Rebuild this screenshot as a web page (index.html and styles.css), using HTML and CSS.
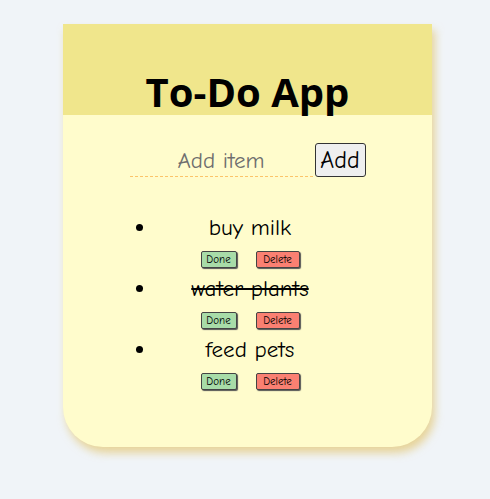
FILE: index.html
```html
<!DOCTYPE html>
<html>
<head>
<meta charset="utf-8">
<link rel="stylesheet" href="styles.css">
</head>
<body>
<div class="card">
  <div class="header"><h1 class="title">To-Do App</h1></div>
  <div class="content">
    <form class="add-form">
      <input class="add-input" type="text" placeholder="Add item">
      <button class="add-btn" type="button">Add</button>
    </form>
    <ul class="list">
      <li class="item">
        <div class="item-text">buy milk</div>
        <div class="actions"><button class="btn done">Done</button><button class="btn delete">Delete</button></div>
      </li>
      <li class="item">
        <div class="item-text completed">water plants</div>
        <div class="actions"><button class="btn done">Done</button><button class="btn delete">Delete</button></div>
      </li>
      <li class="item">
        <div class="item-text">feed pets</div>
        <div class="actions"><button class="btn done">Done</button><button class="btn delete">Delete</button></div>
      </li>
    </ul>
  </div>
</div>
</body>
</html>
```
FILE: styles.css
```css
html, body { margin: 0; padding: 0; }
body {
  background: #f0f4f8;
  font-family: "Comic Neue", "Open Sans", "DejaVu Sans", sans-serif;
  padding: 24px 0 0 5px;
  box-sizing: border-box;
  min-height: 499px;
}
.card {
  width: 369px;
  height: 423px;
  margin: 0 auto;
  background: #fffccc;
  border-radius: 0 0 40px 40px;
  box-shadow: 3px 6px 9px rgba(225, 190, 90, 0.6);
  overflow: hidden;
}
.header {
  background: #f0e68c;
  height: 91px;
  display: flex;
  align-items: flex-end;
  justify-content: center;
}
.title {
  margin: 0;
  font-family: "Open Sans", "DejaVu Sans", sans-serif;
  font-weight: 700;
  font-size: 40px;
  line-height: 46px;
  color: #000;
}
.content { padding-top: 28px; }
.add-form {
  display: flex;
  justify-content: center;
  align-items: flex-end;
  margin: 0;
}
.add-input {
  width: 183px;
  height: 33px;
  box-sizing: border-box;
  border: none;
  border-bottom: 1px dashed #fbc46a;
  background: transparent;
  text-align: center;
  font-family: inherit;
  font-size: 23px;
  padding: 0;
  outline: none;
}
.add-input::placeholder { color: #6e6e6e; }
.add-btn {
  margin-left: 2px;
  height: 34px;
  width: 51px;
  padding: 0;
  font-family: inherit;
  font-size: 24px;
  background: #efefef;
  border: 1px solid #333;
  border-radius: 3px;
  color: #000;
}
.list {
  margin: 36px 0 0 0;
  padding: 0 89px 0 94px;
}
.item {
  text-align: center;
  height: 61px;
  font-size: 23px;
}
.item-text { line-height: 30px; }
.completed { text-decoration: line-through; }
.actions {
  display: flex;
  justify-content: center;
  gap: 19px;
  margin-top: 8px;
}
.btn {
  font-family: inherit;
  font-size: 11px;
  height: 17px;
  padding: 0;
  border: 1px solid #444;
  border-radius: 2px;
  box-shadow: 1px 1px 1px #555;
  color: #000;
}
.done { background: #a8dca8; width: 36px; }
.delete { background: #fa8072; width: 44px; }
```
